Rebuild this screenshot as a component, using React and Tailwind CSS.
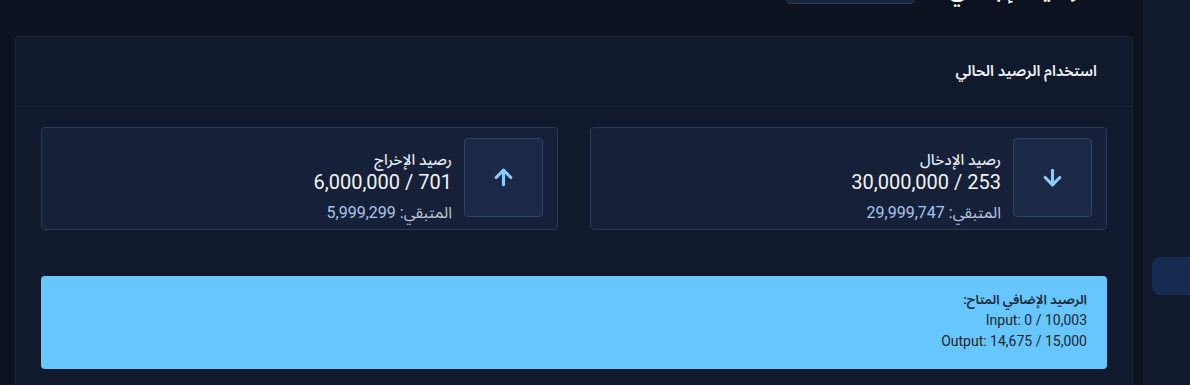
import { ArrowDown, ArrowUp } from 'lucide-react';

const font = {
  fontFamily: 'Roboto, "Noto Sans Arabic", "Noto Naskh Arabic", "Noto Sans", "DejaVu Sans", sans-serif',
};

function BalanceBox({ icon, title, used, limit, left }) {
  return (
    <div className="flex items-start gap-3 rounded border border-[#293a56] bg-[#162139] pt-[10px] pr-[14px] pb-[6px] pl-[10px]">
      <div className="grid h-[79px] w-[79px] shrink-0 place-items-center rounded border border-[#2e4368] bg-[#1b2946] text-[#8ccbfb]">
        {icon}
      </div>
      <div className="pt-[11px]">
        <p className="text-[15px] leading-[22px] font-medium text-[#e6ebf2]">{title}</p>
        <p className="text-[20px] leading-[22px] text-[#f1f4f8]">
          {used} / {limit}
        </p>
        <p className="mt-[10px] text-[16px] leading-[20px] text-[#b9c7da]">
          المتبقي: <span className="text-[#a6c6ec]">{left}</span>
        </p>
      </div>
    </div>
  );
}

export default function App() {
  return (
    <div className="flex h-[385px] w-[1190px] overflow-hidden bg-[#0c1220]" style={font}>
      {/* Main */}
      <div dir="rtl" className="flex-1 pr-[10px] pl-[15px]">
        {/* Page header, scrolled mostly out of view */}
        <div className="-mt-[36px] flex h-[40px] items-end gap-[34px] pr-[40px]">
          <h1 className="text-[22px] leading-[28px] font-semibold text-white">الرصيد الإجمالي</h1>
          <div className="h-[40px] w-[129px] rounded border border-[#2a3a55] bg-[#1a2438]" />
        </div>

        {/* Card */}
        <div className="mt-[32px] rounded border border-[#1b263b] bg-[#111a2c]">
          <div className="flex h-[70px] items-center border-b border-[#172034] pr-[35px]">
            <h2 className="text-[15px] font-semibold text-[#eef2f7]">استخدام الرصيد الحالي</h2>
          </div>

          <div className="px-[25px] pt-5 pb-8">
            <div className="grid grid-cols-2 gap-8">
              <BalanceBox
                icon={<ArrowDown size={25} strokeWidth={3} />}
                title="رصيد الإدخال"
                used="253"
                limit="30,000,000"
                left="29,999,747"
              />
              <BalanceBox
                icon={<ArrowUp size={25} strokeWidth={3} />}
                title="رصيد الإخراج"
                used="701"
                limit="6,000,000"
                left="5,999,299"
              />
            </div>

            <div className="mt-[46px] rounded bg-[#66c6fd] px-5 pt-[13px] pb-[17px] text-sm leading-[21px] text-[#1c2636]">
              <p className="text-[13px] font-semibold">الرصيد الإضافي المتاح:</p>
              <p>Input: 0 / 10,003</p>
              <p>Output: 14,675 / 15,000</p>
            </div>
          </div>
        </div>
      </div>

      {/* Sidebar */}
      <div className="w-[47px] shrink-0 bg-[#111a2c] pt-[257px] pl-[9px]">
        <div className="h-[38px] w-[60px] rounded-lg bg-[#172a52]" />
      </div>
    </div>
  );
}
